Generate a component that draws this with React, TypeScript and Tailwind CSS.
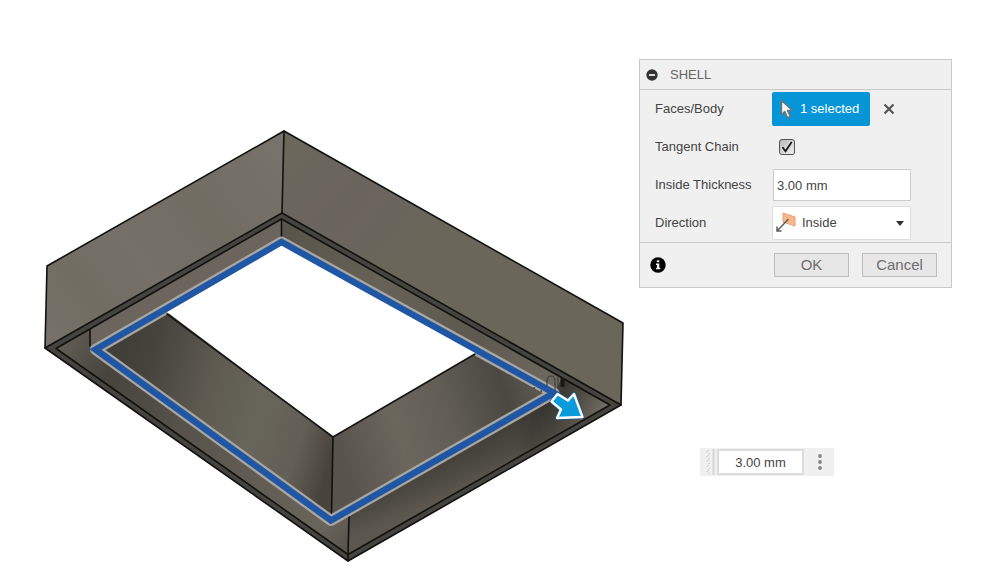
import React, { useState } from "react";

function ShellModel() {
  return (
    <svg viewBox="40 125 590 440" className="block w-full" role="img" aria-label="Hollow rectangular frame">
      <defs>
        <linearGradient id="leftFace" gradientUnits="userSpaceOnUse" x1="45" y1="340" x2="290" y2="150">
          <stop offset="0" stopColor="#77726a" />
          <stop offset="0.2" stopColor="#716d62" />
          <stop offset="0.4" stopColor="#75716a" />
          <stop offset="0.65" stopColor="#716d63" />
          <stop offset="1" stopColor="#77726b" />
        </linearGradient>
        <linearGradient id="rightFace" gradientUnits="userSpaceOnUse" x1="284" y1="150" x2="400" y2="260">
          <stop offset="0" stopColor="#6b675b" />
          <stop offset="0.5" stopColor="#6a645e" />
          <stop offset="1" stopColor="#6a665a" />
        </linearGradient>
        <linearGradient id="upperRight" gradientUnits="userSpaceOnUse" x1="282" y1="230" x2="560" y2="385">
          <stop offset="0" stopColor="#58544a" />
          <stop offset="0.35" stopColor="#666258" />
          <stop offset="0.7" stopColor="#5d594f" />
          <stop offset="1" stopColor="#6f6b62" />
        </linearGradient>
        <linearGradient id="lowerLeft" gradientUnits="userSpaceOnUse" x1="56" y1="348" x2="348" y2="554">
          <stop offset="0" stopColor="#625e55" />
          <stop offset="0.16" stopColor="#47443e" />
          <stop offset="0.5" stopColor="#5b574f" />
          <stop offset="0.9" stopColor="#68645a" />
          <stop offset="1" stopColor="#57534b" />
        </linearGradient>
        <linearGradient id="lowerRight" gradientUnits="userSpaceOnUse" x1="445" y1="452" x2="462" y2="492">
          <stop offset="0" stopColor="#403e38" />
          <stop offset="0.5" stopColor="#4c4942" />
          <stop offset="1" stopColor="#5d584f" />
        </linearGradient>
        <linearGradient id="rightCorner" gradientUnits="userSpaceOnUse" x1="560" y1="380" x2="606" y2="405">
          <stop offset="0" stopColor="#34322d" />
          <stop offset="0.5" stopColor="#4f4b44" />
          <stop offset="1" stopColor="#716c62" />
        </linearGradient>
        <linearGradient id="cornerFade" gradientUnits="userSpaceOnUse" x1="515" y1="0" x2="565" y2="0">
          <stop offset="0" stopColor="white" stopOpacity="0" />
          <stop offset="1" stopColor="white" />
        </linearGradient>
        <mask id="cornerMask" maskUnits="userSpaceOnUse" x="500" y="360" width="120" height="110">
          <path d="M500 360h120v110H500Z" fill="url(#cornerFade)" />
        </mask>
        <linearGradient id="innerLeft" gradientUnits="userSpaceOnUse" x1="120" y1="345" x2="345" y2="410">
          <stop offset="0" stopColor="#403e38" />
          <stop offset="0.15" stopColor="#47443e" />
          <stop offset="0.42" stopColor="#5f5b51" />
          <stop offset="0.65" stopColor="#68655a" />
          <stop offset="0.85" stopColor="#645f56" />
          <stop offset="1" stopColor="#48443d" />
        </linearGradient>
        <linearGradient id="innerRight" gradientUnits="userSpaceOnUse" x1="333" y1="430" x2="530" y2="370">
          <stop offset="0" stopColor="#58534c" />
          <stop offset="0.3" stopColor="#6b675d" />
          <stop offset="0.55" stopColor="#625e56" />
          <stop offset="0.85" stopColor="#4a4841" />
          <stop offset="1" stopColor="#5b574f" />
        </linearGradient>
      </defs>
      <g strokeLinejoin="round" strokeLinecap="round">
        <path d="M47 266 284 131 282 213 45 348Z" fill="url(#leftFace)" />
        <path d="M284 131 623 323 621 405 282 213Z" fill="url(#rightFace)" />
        <path d="M45 348 282 213 621 405 348 561Z" fill="#46443e" />
        <path d="M56 348.500 281.500 219 281.500 242 95 349Z" fill="#6b655e" />
        <path d="M281.500 219 562 378 562 393 554 393 281.500 242Z" fill="url(#upperRight)" />
        <path d="M56 348.500 90 329 90 349 331 520 349 515 348 554.500Z" fill="url(#lowerLeft)" />
        <path d="M349 510 554 393 562 378 610 405 348 554.500Z" fill="url(#lowerRight)" />
        <path d="M505 421 554 393 562 390 562 378 610 405 505 465Z" fill="url(#rightCorner)" mask="url(#cornerMask)" />
        <path d="M95 349 167 308 333 437 331 520Z" fill="url(#innerLeft)" />
        <path d="M333 437 476 350 554 393 331 520Z" fill="url(#innerRight)" />
        <g fill="none" stroke="#11110f" strokeWidth="1.6">
          <path d="M45 348 47 266 284 131 623 323 621 405 348 561Z" />
          <path d="M45 348 282 213 621 405M284 131 282 213" />
          <path d="M56 348.500 281.500 219 610 405 348 554.500Z" />
          <path d="M281.500 219V240M90 329V346M349 516 348 554.500M348 554.500V561M333 437 331.500 516" />
        </g>
        <path d="M95.500 349.500 281.500 242 554 393 331 520.500Z" fill="none" stroke="#aaa69f" strokeWidth="11" />
        <path d="M167 312 281.500 245 477 353 333 437Z" fill="white" />
        <path d="M167 314 333 437 475 354" fill="none" stroke="#151513" strokeWidth="1.600" />
        <path d="M95.500 349.500 281.500 242 554 393 331 520.500Z" fill="none" stroke="#2158a6" strokeWidth="6.500" strokeLinejoin="miter" />
        <path d="M95.500 349.500 281.500 242 554 393 331 520.500Z" fill="none" stroke="#17488e" strokeWidth="6.500" strokeLinejoin="miter" strokeLinecap="butt" strokeDasharray="1 2" opacity="0.15" />
        <g fill="none" stroke="#3a3833" strokeWidth="1">
          <path d="M547 386v-5q0-5 4-5t4 5v9M558 377v11" />
          <path d="M562.500 378v9" stroke="#191816" strokeWidth="4" strokeLinecap="butt" />
          <path d="M534 388h.5M541 391h.5" strokeWidth="1.500" />
        </g>
        <path d="M558 394.500 568.500 401 574.500 394.500 583 417.500 557.500 418.500 561.500 410 552 402Z" transform="translate(-.5 -.5)" fill="#0a9bdc" stroke="#245987" strokeWidth="4" />
        <path d="M558 394.500 568.500 401 574.500 394.500 583 417.500 557.500 418.500 561.500 410 552 402Z" transform="translate(-.5 -.5)" fill="#0a9bdc" stroke="white" strokeWidth="2.400" />
      </g>
    </svg>
  );
}

function ShellDialog() {
  const [tangent, setTangent] = useState(true);
  return (
    <form
      className="border border-[#c9c9c9] bg-[#f0f0f0] text-[13px] leading-4 text-[#444444]"
      onSubmit={(e) => e.preventDefault()}
    >
      <header className="flex h-[30px] items-center gap-3 border-b border-[#c9c9c9] pl-[6px] text-[#666666]">
        <button type="button" aria-label="Collapse" className="block">
          <svg viewBox="0 0 12 12" className="block size-3">
            <circle cx="6" cy="6" r="5.700" fill="#333333" />
            <path d="M3 6h6" stroke="#f0f0f0" strokeWidth="1.800" />
          </svg>
        </button>
        <h2>SHELL</h2>
      </header>

      <div className="grid auto-rows-[38px] grid-cols-[117px_1fr] items-center pl-[15px]">
        <label htmlFor="faces">Faces/Body</label>
        <div className="flex items-center">
          <button
            id="faces"
            type="button"
            className="flex h-[34px] w-[98px] items-center gap-2 rounded-[2px] bg-[#0696d7] pl-2 whitespace-nowrap text-white"
          >
            <svg viewBox="0 0 12 20" className="h-5 w-3 shrink-0">
              <path d="M1.500 1.500v14l3.300-3.100 2.600 6.100 2.700-1.200-2.600-5.900 4.300-.3Z" fill="#f4f4f4" stroke="#77706c" strokeWidth="1.300" strokeLinejoin="round" />
            </svg>
            1 selected
          </button>
          <button type="button" aria-label="Clear selection" className="ml-[13px]">
            <svg viewBox="0 0 12 12" className="block size-3">
              <path d="m1.500 1.500 9 9m0-9-9 9" stroke="#555555" strokeWidth="2.200" />
            </svg>
          </button>
        </div>

        <label htmlFor="tangent">Tangent Chain</label>
        <div className="relative ml-[7px] size-4">
          <input
            id="tangent"
            type="checkbox"
            checked={tangent}
            onChange={(e) => setTangent(e.target.checked)}
            className="block size-4 appearance-none rounded-[3px] border border-[#555555] bg-linear-to-br from-[#b8b8b8] to-[#f0f0f0]"
          />
          {tangent && (
            <svg viewBox="0 0 16 16" className="pointer-events-none absolute inset-0 size-4">
              <path d="m3.500 8.300 3 4L12.700 3" fill="none" stroke="#151515" strokeWidth="1.700" />
            </svg>
          )}
        </div>

        <label htmlFor="thickness">Inside Thickness</label>
        <input
          id="thickness"
          defaultValue="3.00 mm"
          className="ml-px h-8 w-[138px] border border-[#cccccc] bg-white px-[3px]"
        />

        <label htmlFor="direction">Direction</label>
        <div className="relative w-[139px]">
          <select
            id="direction"
            defaultValue="Inside"
            className="block h-[34px] w-full appearance-none rounded-[2px] border border-[#dcdcdc] bg-white pl-[29px]"
          >
            <option>Inside</option>
            <option>Outside</option>
            <option>Both</option>
          </select>
          <svg viewBox="0 0 20 20" className="pointer-events-none absolute top-[6px] left-1 size-5">
            <path d="m7 1 12 4v9L7 10Z" fill="#f6b88b" stroke="#e6a072" />
            <path d="M12.500 7 2 18M1 14.500v4.500h4.500" fill="none" stroke="#5c5c5c" strokeWidth="1.500" />
          </svg>
          <svg viewBox="0 0 8 5" className="pointer-events-none absolute top-[15px] right-[7px] h-[5px] w-2">
            <path d="M0 0h8L4 5Z" fill="#333333" />
          </svg>
        </div>
      </div>

      <footer className="flex h-[45px] items-center border-t border-[#c9c9c9] pl-[10px] text-[15px] leading-5 text-[#6e6e6e]">
        <button type="button" aria-label="Information">
          <svg viewBox="0 0 16 16" className="block size-4">
            <circle cx="8" cy="8" r="7.700" fill="black" />
            <path d="M6.800 3.300h2.500v2H6.800ZM6 6.500h3.300v4.300h1v1.500H6v-1.500h1V8H6Z" fill="#f0f0f0" />
          </svg>
        </button>
        <button type="submit" className="ml-[108px] h-6 w-[75px] border border-[#bcbcbc] bg-[#e7e7e7]">
          OK
        </button>
        <button type="button" className="ml-[13px] h-6 w-[75px] border border-[#bcbcbc] bg-[#e7e7e7]">
          Cancel
        </button>
      </footer>
    </form>
  );
}

function ThicknessToolbar() {
  return (
    <div className="flex h-7 w-[134px] items-center bg-[#f0f0f0] text-[13px] leading-4 text-[#444444]">
      <svg viewBox="0 0 10 28" className="ml-[5px] h-7 w-[10px] shrink-0">
        <path d="m1 4 3-2M1 9l3-2m-3 7 3-2m-3 7 3-2m-3 7 3-2M3 6l2-1m-2 6 2-1m-2 6 2-1m-2 6 2-1m-2 6 2-1" stroke="#cfcfcf" />
        <path d="M8.500 1v26" stroke="#d5d5d5" strokeWidth="2" />
      </svg>
      <input
        aria-label="Thickness"
        defaultValue="3.00 mm"
        className="ml-[2px] h-[26px] w-[87px] border-2 border-[#dcdcdc] bg-white text-center"
      />
      <button type="button" aria-label="More options" className="ml-[13px]">
        <svg viewBox="0 0 6 18" className="block h-[18px] w-[6px]">
          <g fill="#858585">
            <circle cx="3" cy="3" r="1.900" />
            <circle cx="3" cy="9" r="1.900" />
            <circle cx="3" cy="15" r="1.900" />
          </g>
        </svg>
      </button>
    </div>
  );
}

export default function App() {
  return (
    <main className="flex min-h-screen items-start bg-white pr-[53px] pl-10 font-['Liberation_Sans',Arial,sans-serif]">
      <div className="min-w-0 flex-1 pt-[125px] pr-[9px]">
        <ShellModel />
      </div>
      <aside className="flex w-[313px] shrink-0 flex-col gap-40 pt-[59px]">
        <ShellDialog />
        <div className="pl-[61px]">
          <ThicknessToolbar />
        </div>
      </aside>
    </main>
  );
}
